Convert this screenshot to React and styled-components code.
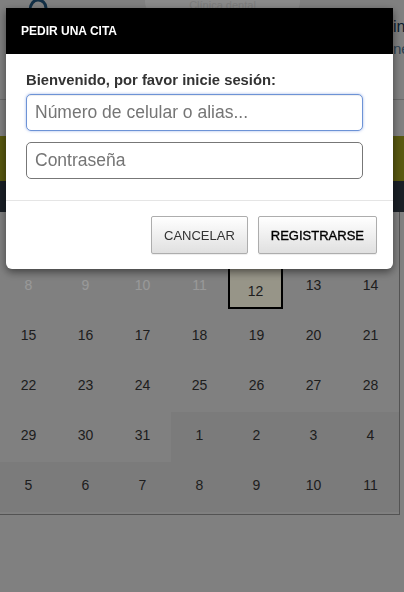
import React from 'react'
import styled, { createGlobalStyle } from 'styled-components'

const GlobalStyle = createGlobalStyle`
  html, body {
    margin: 0;
    padding: 0;
    background: #d6d6d6;
    font-family: "Liberation Sans", Arial, sans-serif;
    overflow: hidden;
  }
  * { box-sizing: border-box; }
`

const weeks = [
  [1, 2, 3, 4, 5, 6, 7],
  [8, 9, 10, 11, 12, 13, 14],
  [15, 16, 17, 18, 19, 20, 21],
  [22, 23, 24, 25, 26, 27, 28],
  [29, 30, 31, 1, 2, 3, 4],
  [5, 6, 7, 8, 9, 10, 11],
]

function App() {
  return (
    <>
      <GlobalStyle />
      <Page>
        <Header>
          <Logo>
            <svg width="20" height="12" viewBox="0 0 20 12">
              <path d="M2 12 C2 6 6 2 10 2 C14 2 18 5 18 10" stroke="#1d4e73" strokeWidth="3" fill="none" />
            </svg>
          </Logo>
          <Pill>Clínica dental</Pill>
          <RightLinks>
            <span>iniciar</span>
            <small>necesita</small>
          </RightLinks>
        </Header>
        <Spacer />
        <Band />
        <DarkBand />
        <Calendar>
          {weeks.map((week, w) =>
            week.map((day, d) => {
              const next = (w === 4 && d >= 3) || w === 5
              const past = w === 1 && d < 4
              const today = w === 1 && d === 4
              return (
                <Cell key={w + '-' + d} next={next}>
                  {today ? <Today>{day}</Today> : <Day past={past}>{day}</Day>}
                </Cell>
              )
            })
          )}
        </Calendar>
      </Page>

      <Backdrop />
      <Modal>
        <ModalHeader>PEDIR UNA CITA</ModalHeader>
        <ModalBody>
          <Label>Bienvenido, por favor inicie sesión:</Label>
          <Input focused placeholder="Número de celular o alias..." />
          <Input type="password" placeholder="Contraseña" />
        </ModalBody>
        <ModalFooter>
          <Button>CANCELAR</Button>
          <Button primary>REGISTRARSE</Button>
        </ModalFooter>
      </Modal>
    </>
  )
}

export default App

const Page = styled.div`
  width: 404px;
  min-height: 592px;
`

const Header = styled.div`
  height: 100px;
  display: flex;
  align-items: flex-start;
  border-bottom: 1px solid #b0b0b0;
  background: #d6d6d6;
`

const Logo = styled.div`
  margin-left: 28px;
  margin-top: -2px;
  width: 20px;
  line-height: 0;
`

const Pill = styled.div`
  margin-left: 97px;
  width: 155px;
  height: 14px;
  border-radius: 0 0 12px 12px;
  background: #e6e6e6;
  color: #d0d0d0;
  font-size: 11px;
  text-align: center;
  line-height: 10px;
  overflow: hidden;
`

const RightLinks = styled.div`
  margin-left: auto;
  width: 11px;
  overflow: hidden;
  white-space: nowrap;
  padding-top: 18px;
  display: flex;
  flex-direction: column;
  gap: 4px;

  span {
    font-size: 16px;
    color: #12324d;
  }
  small {
    font-size: 15px;
    color: #4a6b88;
  }
`

const Spacer = styled.div`
  height: 36px;
`

const Band = styled.div`
  height: 45px;
  background: #94941a;
`

const DarkBand = styled.div`
  height: 31px;
  background: #2c3540;
`

const Calendar = styled.div`
  width: 400px;
  display: grid;
  grid-template-columns: repeat(7, 57px);
  grid-auto-rows: 50px;
  padding-bottom: 2px;
  border-right: 1px solid #8a8a8a;
  border-bottom: 1px solid #8a8a8a;
`

const Cell = styled.div`
  display: flex;
  align-items: center;
  justify-content: center;
  padding-bottom: 4px;
  background: ${(p) => (p.next ? '#cecece' : 'transparent')};
`

const Day = styled.span`
  font-size: 14px;
  color: ${(p) => (p.past ? '#ffffff' : '#333333')};
`

const Today = styled.div`
  align-self: stretch;
  flex: 1;
  margin: 4px 2px -1px 0;
  border: 2px solid #000;
  background: #fcf8e3;
  display: flex;
  align-items: center;
  justify-content: center;
  padding-top: 6px;
  font-size: 14px;
  color: #333;
`

const Backdrop = styled.div`
  position: fixed;
  inset: 0;
  background: rgba(0, 0, 0, 0.4);
`

const Modal = styled.div`
  position: fixed;
  top: 8px;
  left: 6px;
  width: 387px;
  background: #fff;
  border-radius: 0 0 6px 6px;
  box-shadow: 0 3px 9px rgba(0, 0, 0, 0.5);
  overflow: hidden;
`

const ModalHeader = styled.div`
  height: 46px;
  background: #000;
  color: #fff;
  font-size: 12px;
  font-weight: bold;
  padding: 0 15px;
  display: flex;
  align-items: center;
`

const ModalBody = styled.div`
  padding: 18px 30px 21px 20px;
  display: flex;
  flex-direction: column;
  gap: 11px;
  border-bottom: 1px solid #e5e5e5;
`

const Label = styled.div`
  font-size: 14.8px;
  font-weight: bold;
  color: #333;
  line-height: 16px;
  margin-bottom: -5px;
`

const Input = styled.input`
  width: 337px;
  height: 37px;
  padding: 0 8px;
  font-family: "Liberation Sans", Arial, sans-serif;
  font-size: 17.5px;
  color: #333;
  border-radius: 5px;
  outline: none;
  border: 1px solid ${(p) => (p.focused ? '#6d93d6' : '#777')};
  box-shadow: ${(p) => (p.focused ? 'inset 0 1px 1px rgba(0,0,0,.075), 0 0 3px rgba(102,140,220,.6)' : 'none')};

  &::placeholder {
    color: #757575;
  }
`

const ModalFooter = styled.div`
  padding: 15px 16px 15px;
  display: flex;
  justify-content: flex-end;
  gap: 10px;
`

const Button = styled.button`
  height: 38px;
  padding: 0 12px;
  font-family: "Liberation Sans", Arial, sans-serif;
  font-size: 13px;
  color: ${(p) => (p.primary ? '#000' : '#333')};
  -webkit-text-stroke: ${(p) => (p.primary ? '0.35px #000' : '0')};
  background: linear-gradient(to bottom, #ffffff 0%, #e0e0e0 100%);
  border: 1px solid #adadad;
  border-radius: 2px;
  box-shadow: inset 0 1px 0 rgba(255, 255, 255, 0.15), 0 1px 1px rgba(0, 0, 0, 0.075);
`
